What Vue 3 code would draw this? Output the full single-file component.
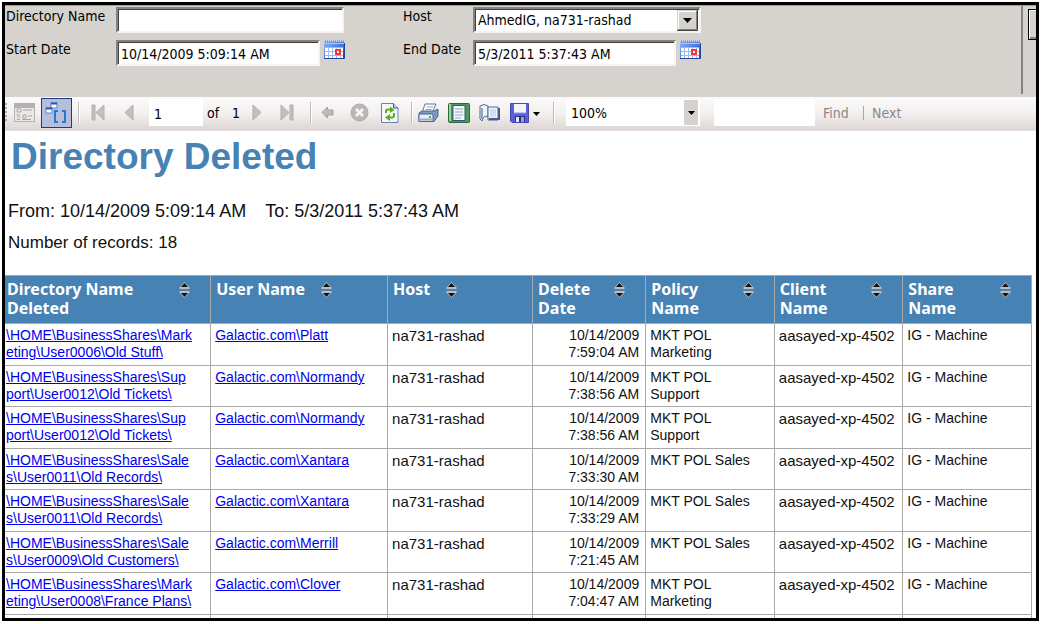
<script setup>
import { ref } from 'vue'

const directory = ref('')
const host = ref('AhmedIG, na731-rashad')
const startDate = ref('10/14/2009 5:09:14 AM')
const endDate = ref('5/3/2011 5:37:43 AM')
const page = ref('1')
const zoom = ref('100%')
const search = ref('')

const columns = [
  { key: 'dir', label: 'Directory Name Deleted' },
  { key: 'user', label: 'User Name', snug: true },
  { key: 'host', label: 'Host', snug: true },
  { key: 'date', label: 'Delete Date' },
  { key: 'policy', label: 'Policy Name' },
  { key: 'client', label: 'Client Name' },
  { key: 'share', label: 'Share Name' },
]

const row = (dir, user, time, policy) => ({
  dir,
  user: 'Galactic.com\\' + user,
  host: 'na731-rashad',
  date: '10/14/2009\n' + time,
  policy,
  client: 'aasayed-xp-4502',
  share: 'IG - Machine',
})

const rows = [
  row('\\HOME\\BusinessShares\\Mark\neting\\User0006\\Old Stuff\\', 'Platt', '7:59:04 AM', 'MKT POL\nMarketing'),
  row('\\HOME\\BusinessShares\\Sup\nport\\User0012\\Old Tickets\\', 'Normandy', '7:38:56 AM', 'MKT POL\nSupport'),
  row('\\HOME\\BusinessShares\\Sup\nport\\User0012\\Old Tickets\\', 'Normandy', '7:38:56 AM', 'MKT POL\nSupport'),
  row('\\HOME\\BusinessShares\\Sale\ns\\User0011\\Old Records\\', 'Xantara', '7:33:30 AM', 'MKT POL Sales'),
  row('\\HOME\\BusinessShares\\Sale\ns\\User0011\\Old Records\\', 'Xantara', '7:33:29 AM', 'MKT POL Sales'),
  row('\\HOME\\BusinessShares\\Sale\ns\\User0009\\Old Customers\\', 'Merrill', '7:21:45 AM', 'MKT POL Sales'),
  row('\\HOME\\BusinessShares\\Mark\neting\\User0008\\France Plans\\', 'Clover', '7:04:47 AM', 'MKT POL\nMarketing'),
]
</script>

<template>
  <div class="window">
    <main class="frame">
      <form class="params" @submit.prevent>
        <div class="fields">
          <label for="directory">Directory Name</label>
          <input id="directory" v-model="directory" class="box wide" type="text" />
          <label for="host">Host</label>
          <span class="combo">
            <select id="host" v-model="host" class="box wide">
              <option>AhmedIG, na731-rashad</option>
            </select>
            <svg class="combo-arrow" width="21" height="21" viewBox="0 0 21 21" aria-hidden="true">
              <rect width="21" height="21" fill="#d6d3ce" />
              <path d="M0 20.500H20.500V0" fill="none" stroke="#404040" />
              <path d="M1 19.500H19.500V1" fill="none" stroke="#848284" />
              <path d="M1.500 19V1.500H19" fill="none" stroke="#fff" />
              <path d="M6 8H15L10.500 13Z" fill="#000" />
            </svg>
          </span>
          <label for="start">Start Date</label>
          <span class="date-field">
            <input id="start" v-model="startDate" class="box" type="text" />
            <button type="button" class="plain" aria-label="Choose start date">
              <svg width="22" height="21" viewBox="0 0 22 21"><use href="#calendar" /></svg>
            </button>
          </span>
          <label for="end">End Date</label>
          <span class="date-field">
            <input id="end" v-model="endDate" class="box" type="text" />
            <button type="button" class="plain" aria-label="Choose end date">
              <svg width="22" height="21" viewBox="0 0 22 21">
                <defs>
                  <linearGradient id="blue" x1="0" y1="0" x2="1" y2="1">
                    <stop offset="0" stop-color="#8cb5f7" />
                    <stop offset="0.500" stop-color="#4a7de0" />
                    <stop offset="1" stop-color="#1b3fa8" />
                  </linearGradient>
                  <g id="calendar">
                    <path d="M1 2H21V19H1Z" fill="url(#blue)" />
                    <path d="M2 1.500H21" stroke="#6d86bd" stroke-width="2" stroke-dasharray="1 1" />
                    <path d="M1 3.500H21" stroke="#a9c6fb" />
                    <path d="M2 8H20V18H2Z" fill="#fff" />
                    <path d="M2 7.500H20M2 11.500H20M2 15.500H20M5.500 7V18M9.500 7V18M13.500 7V18M17.500 7V18" stroke="#9dbaf4" />
                    <path d="M1 18.500H21.500V3" fill="none" stroke="#1e449f" />
                    <rect x="13" y="10" width="4" height="4" fill="#fff" stroke="#f3363b" stroke-width="2" />
                  </g>
                </defs>
                <use href="#calendar" />
              </svg>
            </button>
          </span>
        </div>
        <div class="submit"><button type="button" class="view" aria-label="View report"></button></div>
      </form>

      <div class="toolbar">
        <span class="grip"></span>
        <button type="button" class="plain" aria-label="Document map">
          <svg width="22" height="20" viewBox="0 0 22 20">
            <rect x="0.500" y="0.500" width="20" height="18" fill="#ebe8e8" stroke="#b5b1b1" />
            <path d="M1 3H20" stroke="#b5b1b1" stroke-width="4" />
            <path d="M3 6H7V9H3ZM9 7H18M3 11V12H6M3 14H6M9 12H12V15H9ZM14 13H18M3 16.500H6M8 16.500H17" fill="none" stroke="#aaa6a6" />
          </svg>
        </button>
        <button type="button" class="plain active" aria-label="Show parameters" aria-pressed="true">
          <svg width="27" height="26" viewBox="0 0 27 26">
            <rect x="8" y="3" width="6" height="5" fill="#fff" stroke="#5a86d4" />
            <path d="M8 3.500H14" stroke="#2659bd" stroke-width="2" />
            <rect x="3" y="8" width="6" height="5" fill="#fff" stroke="#5a86d4" />
            <path d="M3 8.500H9" stroke="#2659bd" stroke-width="2" />
            <path d="M15 11H12V22H15M19 11H22V22H19" fill="none" stroke="#2878ce" stroke-width="2" />
          </svg>
        </button>
        <span class="sep"></span>
        <button type="button" class="plain" aria-label="First page" disabled>
          <svg width="14" height="17" viewBox="0 0 14 17"><path d="M1 1H4V16H1ZM13 1V16L5 8.500Z" fill="#c3bfbf" stroke="#b2aeae" /></svg>
        </button>
        <button type="button" class="plain" aria-label="Previous page" disabled>
          <svg width="10" height="17" viewBox="0 0 10 17"><path d="M9 1V16L1 8.500Z" fill="#c3bfbf" stroke="#b2aeae" /></svg>
        </button>
        <input v-model="page" class="flat page" type="text" aria-label="Current page" />
        <span class="text">of</span>
        <span class="text">1</span>
        <button type="button" class="plain" aria-label="Next page" disabled>
          <svg width="10" height="17" viewBox="0 0 10 17"><path d="M1 1V16L9 8.500Z" fill="#c3bfbf" stroke="#b2aeae" /></svg>
        </button>
        <button type="button" class="plain" aria-label="Last page" disabled>
          <svg width="14" height="17" viewBox="0 0 14 17"><path d="M10 1H13V16H10ZM1 1V16L9 8.500Z" fill="#c3bfbf" stroke="#b2aeae" /></svg>
        </button>
        <span class="sep"></span>
        <button type="button" class="plain" aria-label="Back" disabled>
          <svg width="13" height="13" viewBox="0 0 13 13"><path d="M1 6.500L6.500 1V4H12V9H6.500V12Z" fill="#bdb9b9" stroke="#a3a0a0" /></svg>
        </button>
        <button type="button" class="plain" aria-label="Stop" disabled>
          <svg width="19" height="19" viewBox="0 0 19 19">
            <circle cx="9.500" cy="9.500" r="8.500" fill="#b9b6b6" stroke="#b0adad" />
            <path d="M6 6L13 13M13 6L6 13" stroke="#f4f2f2" stroke-width="3" />
          </svg>
        </button>
        <button type="button" class="plain" aria-label="Refresh">
          <svg width="18" height="20" viewBox="0 0 18 20">
            <path d="M0.500 0.500H12.500L17 5V19.500H0.500Z" fill="#f3f7ff" stroke="#6b82a8" />
            <path d="M12.500 0.500V5H17" fill="#c2d2ee" stroke="#3d5684" />
            <path d="M5 10V8Q5 6.500 7 6.500H10M13 10V12Q13 14.500 11 14.500H8" fill="none" stroke="#62ad0c" stroke-width="2" />
            <path d="M9 3.500L13.500 7L9 10ZM9 11L4 14.500L9 18Z" fill="#62ad0c" />
          </svg>
        </button>
        <span class="sep"></span>
        <button type="button" class="plain" aria-label="Print">
          <svg width="21" height="20" viewBox="0 0 21 20">
            <path d="M7 1H18L14 10H4Z" fill="#fff" stroke="#61799f" />
            <path d="M8.500 4H15M7.500 6.500H13.500" stroke="#8ba5cd" />
            <path d="M1 10L4 8H16L20 6V13L16 18.500H1Z" fill="#7e98bd" stroke="#4c668f" />
            <path d="M1 11H15V18.500H1Z" fill="#e7eef9" stroke="#4c668f" />
            <path d="M2 16.500H14" stroke="#9aafd0" stroke-width="2" />
            <path d="M11 14H13" stroke="#62ad0c" stroke-width="2" />
          </svg>
        </button>
        <button type="button" class="plain" aria-label="Print layout">
          <svg width="22" height="20" viewBox="0 0 22 20">
            <rect x="0.500" y="0.500" width="21" height="19" rx="1" fill="#4c9858" stroke="#2b6a39" />
            <path d="M2 1V18" stroke="#9fd0a0" stroke-width="2" />
            <path d="M5 2.500H17V17.500H5Z" fill="#f8faff" stroke="#355384" />
            <path d="M7 6H15M7 9H15M7 12H15M7 15H13" stroke="#8b9fc2" />
          </svg>
        </button>
        <button type="button" class="plain" aria-label="Page setup">
          <svg width="21" height="19" viewBox="0 0 21 19">
            <path d="M1 3Q5 0 9 3V14Q5 11 3 18L1 16Z" fill="#f3f6fd" stroke="#536988" />
            <path d="M3 5V16" stroke="#91a4c2" stroke-width="2" />
            <path d="M9 4H19V17H9Z" fill="#eef4ff" stroke="#536988" />
            <path d="M10 16H20V5" fill="none" stroke="#425b88" stroke-width="2" />
            <path d="M11 6H17V14H11Z" fill="#cfdef8" />
          </svg>
        </button>
        <button type="button" class="plain" aria-label="Export">
          <svg width="31" height="20" viewBox="0 0 31 20">
            <path d="M0.500 0.500H18.500V19.500H2L0.500 18Z" fill="#5c60d8" stroke="#4549b0" />
            <rect x="4" y="1" width="12" height="9" fill="#f2f4ff" />
            <path d="M4 10H16" stroke="#8f93e8" />
            <rect x="5" y="13" width="10" height="6" fill="#2e327d" />
            <rect x="6" y="14" width="3" height="5" fill="#e8eafc" />
            <rect x="11" y="14" width="3" height="5" fill="#9ca0df" />
            <path d="M23 9H30L26.500 13Z" fill="#000" />
          </svg>
        </button>
        <span class="sep"></span>
        <span class="combo zoom">
          <select v-model="zoom" class="flat" aria-label="Zoom">
            <option>100%</option>
          </select>
          <svg class="zoom-arrow" width="14" height="25" viewBox="0 0 14 25" aria-hidden="true">
            <rect width="14" height="25" fill="#d6d3ce" />
            <path d="M4 11H11L7.500 15Z" fill="#000" />
          </svg>
        </span>
        <input v-model="search" class="flat search" type="text" aria-label="Search text" />
        <button type="button" class="plain find text" disabled>Find</button>
        <span class="pipe"></span>
        <button type="button" class="plain find text" disabled>Next</button>
      </div>

      <section class="report">
        <h1>Directory Deleted</h1>
        <p class="range"><span>From: 10/14/2009 5:09:14 AM</span><span>To: 5/3/2011 5:37:43 AM</span></p>
        <p>Number of records: 18</p>
        <table>
          <colgroup>
            <col v-for="c in columns" :key="c.key" :class="'col-' + c.key" />
          </colgroup>
          <thead>
            <tr>
              <th v-for="c in columns" :key="c.key" scope="col">
                <div class="head" :class="{ snug: c.snug }">
                  <span>{{ c.label }}</span>
                  <button type="button" class="plain" :aria-label="'Sort by ' + c.label">
                    <svg width="11" height="16" viewBox="0 0 11 16">
                      <path d="M5.500 0L10.500 5.500V7H0.500V5.500Z" fill="#bdbdbd" />
                      <path d="M5.500 1L9 5H2Z" fill="#111" />
                      <path d="M5.500 16L10.500 10.500V9H0.500V10.500Z" fill="#bdbdbd" />
                      <path d="M5.500 15L9 11H2Z" fill="#111" />
                    </svg>
                  </button>
                </div>
              </th>
            </tr>
          </thead>
          <tbody>
            <tr v-for="(r, i) in rows" :key="i">
              <td><a href="#">{{ r.dir }}</a></td>
              <td><a href="#">{{ r.user }}</a></td>
              <td class="machine">{{ r.host }}</td>
              <td class="date">{{ r.date }}</td>
              <td>{{ r.policy }}</td>
              <td class="machine">{{ r.client }}</td>
              <td>{{ r.share }}</td>
            </tr>
            <tr class="more"><td v-for="c in columns" :key="c.key"></td></tr>
          </tbody>
        </table>
      </section>
    </main>
  </div>
</template>

<style>
body {
  margin: 0;
  background: #fff;
}
</style>

<style scoped>
* {
  box-sizing: border-box;
}
.window {
  height: 100vh;
  padding: 2px 4px 3px 2px;
}
.frame {
  height: 100%;
  overflow: hidden;
  border: 3px solid #000;
  background: #fff;
}
.params,
.toolbar,
.box,
.flat,
.find {
  font: 14px/17px "DejaVu Sans Condensed", "DejaVu Sans", sans-serif;
  color: #000;
}
.params {
  display: flex;
  justify-content: space-between;
  min-height: 92px;
  background: #d6d3ce;
  border-top: 1px solid #a39c9a;
}
.fields {
  display: grid;
  grid-template-columns: 110px 287px 70px 228px;
  grid-auto-rows: 26px;
  row-gap: 7px;
  align-content: start;
  padding: 1px 0 0 1px;
}
.fields label {
  padding-top: 1px;
  white-space: nowrap;
}
.box {
  width: 204px;
  height: 26px;
  margin: 0;
  padding: 1px 1px 0 3px;
  background: #fff;
  border: 2px solid;
  border-color: #848284 #f5f4f2 #f5f4f2 #848284;
  border-radius: 0;
  box-shadow: inset 1px 1px #404040;
  outline: none;
  appearance: none;
}
.wide {
  width: 228px;
}
select.box {
  padding-right: 24px;
}
.date-field {
  display: flex;
  align-items: flex-start;
  gap: 3px;
}
.combo {
  position: relative;
  display: block;
}
.combo-arrow {
  position: absolute;
  top: 3px;
  right: 3px;
  pointer-events: none;
}
.plain {
  display: block;
  padding: 0;
  border: 0;
  background: none;
}
.plain svg {
  display: block;
}
.submit {
  width: 15px;
  height: 88px;
  padding: 3px 0 0 5px;
  border-left: 2px solid #848284;
  overflow: hidden;
}
.view {
  width: 90px;
  height: 31px;
  background: #d6d3ce;
  border: 1px solid #000;
  box-shadow: inset 1px 1px #fff, inset -1px -2px #848284;
}
.toolbar {
  display: grid;
  grid-template-columns:
    9px 27px 36px 14px 33px 25px 58px 25px 20px 28px 29px 12px 29px 31px
    29px 8px 30px 31px 31px 42px 14px 148px 109px 39px 10px auto;
  align-items: center;
  justify-items: start;
  height: 34px;
  padding-bottom: 2px;
  background: linear-gradient(#fbf9f9, #f3f0f0 50%, #ddd6d3);
  border-bottom: 1px solid #e6e1dc;
}
.grip {
  width: 2px;
  height: 20px;
  background: repeating-linear-gradient(#aaa 0 2px, transparent 2px 4px);
}
.active {
  padding: 1px;
  border: 1px solid #1f3a80;
  background: #b5bfdb;
}
.sep {
  width: 2px;
  height: 21px;
  margin-left: 1px;
  background: #bdb8bd;
  border-right: 1px solid #fff;
}
.flat {
  height: 27px;
  margin: 0;
  padding: 2px 5px 0;
  border: 0;
  border-radius: 0;
  background: #fff;
  outline: none;
  appearance: none;
}
.page {
  width: 54px;
}
.zoom select {
  display: block;
  width: 134px;
}
.zoom-arrow {
  position: absolute;
  top: 1px;
  right: 2px;
  pointer-events: none;
}
.search {
  width: 101px;
}
.text {
  padding-top: 2px;
}
.find {
  color: #8a8787;
}
.pipe {
  width: 1px;
  height: 14px;
  margin-left: 1px;
  background: #aaa6a8;
}
h1,
p {
  margin: 0;
  font-family: "Liberation Sans", Arial, sans-serif;
}
h1 {
  padding: 5px 0 0 6px;
  font-size: 37px;
  line-height: 42px;
  color: #4682b4;
}
p {
  padding-left: 3px;
  font-size: 17px;
  line-height: 32px;
  color: #111;
}
.range {
  display: flex;
  gap: 19px;
  margin-top: 17px;
  font-size: 18px;
}
table {
  width: calc(100% - 4px);
  margin-top: 16px;
  table-layout: fixed;
  border-collapse: collapse;
  font: 14px/17px "Liberation Sans", Arial, sans-serif;
}
.col-dir {
  width: 20%;
}
.col-user {
  width: 17.2%;
}
.col-host {
  width: 14.1%;
}
.col-date {
  width: 11%;
}
.col-policy,
.col-client,
.col-share {
  width: 12.5%;
}
th,
td {
  border: 1px solid #a9a9a9;
  vertical-align: top;
}
th:first-child,
td:first-child {
  border-left: 0;
}
th {
  height: 48px;
  padding: 4px 20px 4px 5px;
  background: #4682b4;
  color: #fff;
  font: bold 16px/19px "Noto Sans", sans-serif;
  text-align: left;
}
th:first-child {
  padding-left: 2px;
}
.head {
  display: flex;
  justify-content: space-between;
  align-items: flex-start;
}
.head .plain {
  flex: none;
  padding-top: 2px;
}
.snug {
  justify-content: flex-start;
  gap: 16px;
}
td {
  height: 42px;
  padding: 3px 2px 3px 4px;
  color: #111;
  white-space: pre;
}
tr:nth-child(even) td {
  height: 41px;
}
td:first-child {
  padding-left: 1px;
}
.machine {
  font-size: 15px;
}
.date {
  padding-right: 6px;
  text-align: right;
}
a {
  color: #0000ee;
  text-decoration: underline;
}
</style>
